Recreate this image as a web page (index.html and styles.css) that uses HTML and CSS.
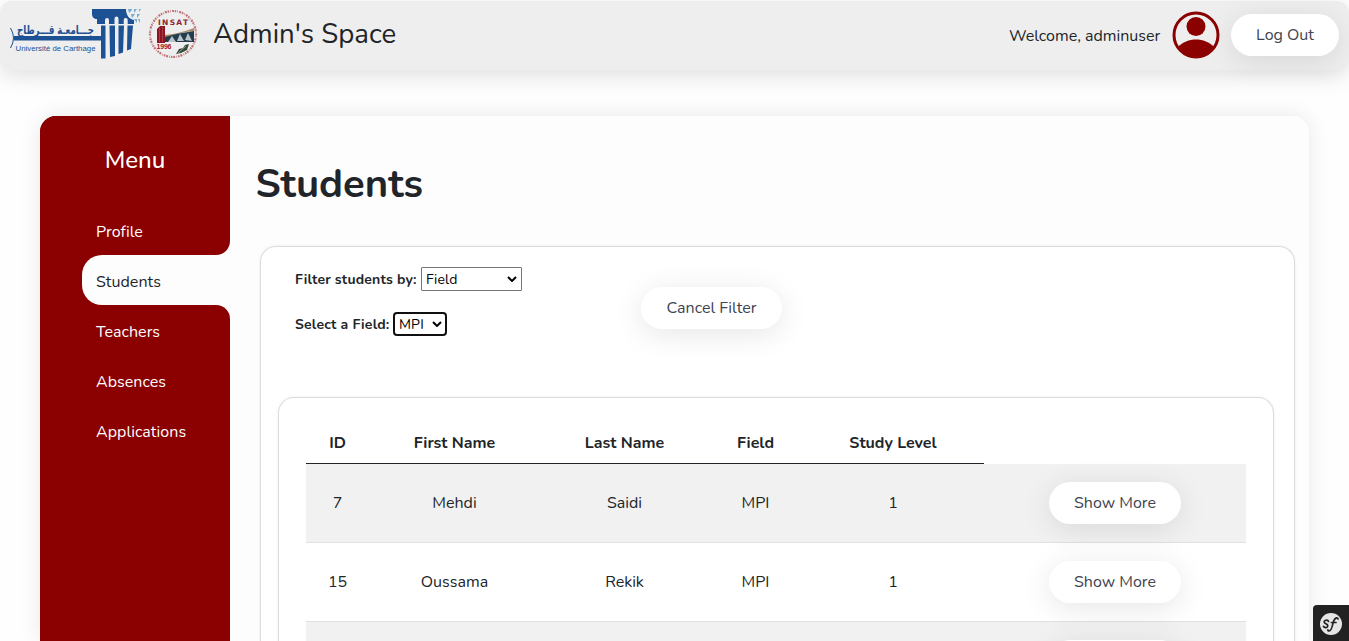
FILE: index.html
```html
<!DOCTYPE html>
<html lang="en">
<head>
<meta charset="utf-8">
<title>Students</title>
<link rel="stylesheet" href="styles.css">
</head>
<body>
<header class="topbar">
  <svg class="logo-carthage" width="132" height="52" viewBox="0 0 132 52">
    <g fill="#1c5194">
      <path d="M82 0h34c0 6 3 10 8 11v4H87v-5c-3 0-5-2-5-5z"/>
      <path d="M4 27h88v4.500H4z"/>
      <path d="M91 16.500h4.500v33H91zM99.500 16.500h5.500v30.500l-5 1zM108.500 16.500h5.500l-1 27-4.500 1.500zM117.500 16.500h5.500l-2 23.500-4 1.500z"/>
    </g>
    <g fill="#eee"><path d="M95 15v-4a2 2 0 0 1 4 0v4zM104.500 15V9.500a2 2 0 0 1 4 0V15zM113.700 15v-4a2 2 0 0 1 4 0v4z"/></g>
    <g fill="#72abd0"><path d="M118 0h4v1l-3 3zM124 0h3l-3 4zM129 0h2l-2 3zM121 5h4l-3 4zM127 5h3l-3 4zM124 10h3v4zM128 10h2v4z"/></g>
    <path d="M.5 19q6 10 0 20" fill="none" stroke="#1c5194"/>
    <text x="84" y="24.500" direction="rtl" class="logo-ar" textLength="77" lengthAdjust="spacingAndGlyphs">جـــامعـة قـــرطاج</text>
    <text x="5.500" y="41.500" class="logo-fr" textLength="80" lengthAdjust="spacingAndGlyphs">Université de Carthage</text>
  </svg>
  <svg class="logo-insat" width="50" height="52" viewBox="0 0 50 52">
    <circle cx="25" cy="25" r="23" fill="none" stroke="#c0747a" stroke-width="2.200" stroke-dasharray="1.500 1 .7 1.300 2 .8"/>
    <text x="10" y="15.500" class="insat-name" textLength="30">INSAT</text>
    <path d="M9 20l3-3h5v17H9z" fill="#8d1420"/><path d="M11.500 19v14M14.500 18v15" stroke="#b65b60" stroke-width=".6"/>
    <path d="M17 26q13-1 29-7v3q-13 1-29 7z" fill="#a98967"/>
    <path d="M17 28q14-4 29-6v11H17z" fill="#233d4d"/>
    <path d="M20 33l4-6 4 6zM29 32l3-7 4 7zM37 31l3-7 4 8z" fill="#b9c3c9"/>
    <text x="8.500" y="39.500" class="insat-year" textLength="15">1996</text>
    <path d="M28 45l3-5 4-1 2-3 4-1-2 6-4 2-2 1z" fill="#344936"/><path d="M30 44l8-7" stroke="#bbb" stroke-width=".7"/>
  </svg>
  <div class="brand">Admin's Space</div>
  <div class="welcome">Welcome, adminuser</div>
  <svg class="avatar" width="48" height="48" viewBox="0 0 48 48">
    <circle cx="24" cy="24" r="22" fill="none" stroke="#8b0000" stroke-width="3"/>
    <circle cx="24" cy="15.500" r="9.500" fill="#8b0000"/>
    <path d="M6 36c9-10 27-10 36 0A21.500 21.500 0 0 1 6 36z" fill="#8b0000"/>
  </svg>
  <button class="pill logout">Log Out</button>
</header>
<main class="shell">
  <nav class="menu">
    <h2 class="menu-title">Menu</h2>
    <a class="item before-active">Profile</a>
    <a class="item active">Students</a>
    <a class="item after-active">Teachers</a>
    <a class="item">Absences</a>
    <a class="item last">Applications</a>
  </nav>
  <section class="content">
    <h1 class="title">Students</h1>
    <div class="panel">
      <div class="filters">
        <div class="fields">
          <div class="field"><label class="label-by">Filter students by:</label><div class="select"><span>Field</span><svg width="10" height="6" viewBox="0 0 10 6"><path d="M1 1l4 4 4-4"/></svg></div></div>
          <div class="field"><label class="label-field">Select a Field:</label><div class="select focused"><span>MPI</span><svg width="10" height="6" viewBox="0 0 10 6"><path d="M1 1l4 4 4-4"/></svg></div></div>
        </div>
        <button class="pill cancel">Cancel Filter</button>
      </div>
      <div class="table-card">
        <div class="row head"><span>ID</span><span>First Name</span><span>Last Name</span><span>Field</span><span>Study Level</span></div>
        <div class="row odd"><span>7</span><span>Mehdi</span><span>Saidi</span><span>MPI</span><span>1</span><div class="action"><button class="pill more">Show More</button></div></div>
        <div class="row"><span>15</span><span>Oussama</span><span>Rekik</span><span>MPI</span><span>1</span><div class="action"><button class="pill more">Show More</button></div></div>
        <div class="row odd"><span></span><span></span><span></span><span></span><span></span><div class="action"><button class="pill more"></button></div></div>
      </div>
    </div>
  </section>
</main>
<div class="debug">
  <svg width="36" height="36" viewBox="0 0 36 36"><circle cx="18" cy="19" r="11" fill="#e6e6e6"/><path d="M15.500 16.500c-.5-2-4.500-1.500-4.300.7.200 1.800 3.800 1.600 3.600 3.800-.2 2-3.500 2.200-4.300.4M25 14c-.5-2-3.500-1.500-4.800 3.500-1 4-1.800 8.500-4 8.500-1 0-1.500-.5-1.300-1.200M18.500 17.500h4.500" fill="none" stroke="#222" stroke-width="1.700" stroke-linecap="round"/></svg>
</div>
</body>
</html>
```

FILE: styles.css
```css
* { box-sizing: border-box; }
body { margin: 0; height: 641px; overflow: hidden; display: flex; flex-direction: column; background: #fefefe; color: #212529; font: 16px/24px Nunito, Lato, sans-serif; }
h1, h2 { margin: 0; }
svg { flex: none; }
.topbar { flex: none; display: flex; align-items: center; height: 69px; margin-top: 1px; padding: 0 10px 1px; background: #eee; border-radius: 12px; box-shadow: 0 6px 22px rgba(0,0,0,.12); white-space: nowrap; }
.logo-carthage { margin-right: 6px; }
.logo-insat { margin-right: 15px; }
.logo-ar { font: bold 12px "DejaVu Sans", sans-serif; fill: #1c5194; }
.logo-fr { font: 8px "Liberation Sans", sans-serif; fill: #1c5194; }
.insat-name { font: bold 7.5px "DejaVu Sans", sans-serif; fill: #8f2530; }
.insat-year { font: bold 7px "Liberation Sans", sans-serif; fill: #a3131f; }
.brand { flex: 1; font-size: 27.6px; line-height: 34px; padding-bottom: 2px; }
.welcome { width: 153px; margin-right: 10px; padding-top: 2px; }
.avatar { margin-right: 11px; }
.pill { height: 42px; padding: 0; border: 0; border-radius: 21px; background: #fff; color: #41434f; font: 16px/24px Nunito, Lato, sans-serif; white-space: nowrap; vertical-align: middle; box-shadow: 0 5px 30px rgba(0,0,0,.1); }
.logout { width: 108px; }
.shell { flex: 1; min-height: 0; display: flex; width: 1269px; margin: 46px 0 0 40px; border-radius: 16px 16px 0 0; background: #fdfdfd; box-shadow: 0 0 22px rgba(0,0,0,.09); overflow: hidden; }
.menu { width: 190px; background: linear-gradient(90deg, #8b0000 170px, #fdfdfd 170px); color: #fff; display: flex; flex-direction: column; }
.menu-title { background: #8b0000; height: 90px; padding-top: 29px; text-align: center; font-size: 24px; line-height: 30px; font-weight: 500; }
.item { height: 50px; padding: 15px 0 0 56px; background: #8b0000; flex: none; letter-spacing: .04px; }
.before-active { border-bottom-right-radius: 14px; height: 49px; padding-top: 14px; }
.after-active { border-top-right-radius: 14px; }
.active { margin-left: 42px; padding-left: 14px; background: #fdfdfd; color: #212529; border-radius: 20px 0 0 20px; }
.last { flex: 1; }
.content { flex: 1; padding: 44px 14px 0 26px; }
.title { margin-left: -.5px; font-size: 40px; line-height: 48px; font-weight: 700; }
.panel { height: 396px; margin: 38px 0 0 4px; border: 1px solid #dcdcdc; border-bottom: 0; border-radius: 16px 16px 0 0; padding: 0 20px 0 17px; background: #fff; box-shadow: 0 0 3px rgba(0,0,0,.08); }
.filters { display: flex; height: 150px; padding: 20px 0 0 17px; }
.fields { display: flex; flex-direction: column; gap: 21px; width: 346px; }
.field { display: flex; align-items: center; height: 24px; font-size: 14px; }
.field label { font-weight: 700; letter-spacing: .2px; padding-top: 1px; }
.label-by { width: 126px; }
.label-field { width: 98px; }
.select { display: flex; align-items: center; justify-content: space-between; width: 101px; height: 24px; padding: 0 4px; border: 1px solid #767676; background: #fff; color: #000; border-radius: 1px; }
.select span { padding-top: 1px; letter-spacing: .15px; }
.select path { fill: none; stroke: #000; stroke-width: 2; }
.focused { width: 54px; border: 2px solid #101010; border-radius: 4px; padding: 0 3px 0 4px; }
.cancel { width: 141px; margin-top: 20px; }
.table-card { height: 245px; border: 1px solid #dcdcdc; border-bottom: 0; border-radius: 16px 16px 0 0; padding: 25px 27px 0; box-shadow: 0 0 3px rgba(0,0,0,.08); overflow: hidden; }
.row { display: grid; grid-template-columns: 63px 171px 169px 93px 182px 262px; align-items: center; height: 79px; text-align: center; border-bottom: 1px solid #dee2e6; }
.head { height: 41px; width: 678px; grid-template-columns: 63px 171px 169px 93px 182px; border-bottom-color: #212529; font-weight: 700; }
.odd { background: #f1f1f1; }
.more { width: 132px; }
.debug { position: fixed; right: 0; bottom: 0; width: 36px; height: 36px; background: #222; border-top-left-radius: 4px; }
```
